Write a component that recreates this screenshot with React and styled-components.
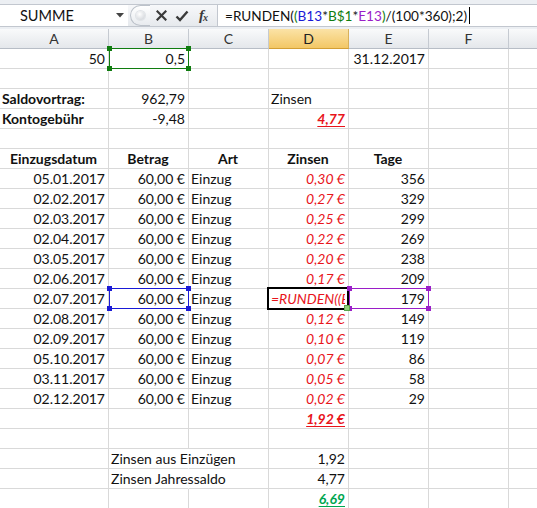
import React from 'react';
import styled, { createGlobalStyle } from 'styled-components';

const Global = createGlobalStyle`
  html, body { margin: 0; padding: 0; background: #fff; }
  body { font-family: Lato, "Liberation Sans", sans-serif; }
`;

const FONT = `Lato, "Liberation Sans", sans-serif`;

const Screen = styled.div`
  width: 537px;
  height: 508px;
  overflow: hidden;
  background: #fff;
  display: flex;
  flex-direction: column;
`;

const FormulaStrip = styled.div`
  height: 29px;
  box-sizing: border-box;
  padding: 4px 0 2px;
  background: #eceff3;
  display: flex;
`;

const FormulaRow = styled.div`
  flex: 1;
  display: flex;
  border-top: 1px solid #c2c7cf;
  border-bottom: 1px solid #c2c7cf;
  background: #fff;
`;

const NameBox = styled.div`
  width: 128px;
  box-sizing: border-box;
  padding: 0 4px 0 20px;
  display: flex;
  align-items: center;
  justify-content: space-between;
  font: 14.5px ${FONT};
  color: #111;
`;

const ButtonArea = styled.div`
  width: 90px;
  box-sizing: border-box;
  display: flex;
  align-items: center;
  background: linear-gradient(#f7f8fa, #e6e9ed);
  border-right: 1px solid #c2c7cf;
`;

const Grip = styled.div`
  width: 20px;
  height: 21px;
  margin-left: 2px;
  box-sizing: border-box;
  border: 1px solid #bcc2ca;
  border-right: none;
  border-radius: 11px 0 0 11px;
  background: linear-gradient(#ffffff, #e8ebef);
  display: flex;
  align-items: center;
  justify-content: center;
`;

const GripDot = styled.div`
  width: 9px;
  height: 9px;
  border-radius: 50%;
  background: radial-gradient(circle at 40% 35%, #ffffff, #c9cdd3);
  box-shadow: 0 0 0 1px #e0e3e7;
`;

const ToolIcon = styled.div`
  width: ${p => p.$w || 20}px;
  display: flex;
  justify-content: center;
  align-items: center;
  color: #3a3a3a;
`;

const FxText = styled.span`
  font: italic bold 15px "Liberation Serif", serif;
  color: #3a3a3a;
  letter-spacing: -1px;
  & sub { font-size: 10px; vertical-align: -1px; }
`;

const FormulaInput = styled.div`
  flex: 1;
  display: flex;
  align-items: center;
  padding-left: 7px;
  font: 13.6px ${FONT};
  color: #111;
  white-space: nowrap;
`;

const Token = styled.span`
  color: ${p => p.$color || '#111'};
`;

const Caret = styled.span`
  display: inline-block;
  width: 1px;
  height: 17px;
  margin-left: 2px;
  background: #000;
`;

const Sheet = styled.div`
  display: grid;
  grid-template-columns: 109px repeat(6, 80px);
  grid-auto-rows: 20px;
`;

const ColHeader = styled.div`
  box-sizing: border-box;
  display: flex;
  align-items: center;
  justify-content: center;
  font: 14px ${FONT};
  color: ${p => (p.$active ? '#222' : '#333')};
  background: ${p =>
    p.$active
      ? 'linear-gradient(#fbe3a6, #f3c766)'
      : 'linear-gradient(#f9fafb, #e4e7eb)'};
  border-right: 1px solid ${p => (p.$active ? '#d8b15a' : '#c5cad1')};
  border-bottom: 1px solid ${p => (p.$active ? '#d39f35' : '#b7bdc6')};
`;

const Cell = styled.div`
  position: relative;
  box-sizing: border-box;
  padding: 0 3px 0 2px;
  display: flex;
  align-items: center;
  justify-content: ${p => (p.$align === 'right' ? 'flex-end' : p.$align === 'center' ? 'center' : 'flex-start')};
  border-right: 1px solid ${p => (p.$open ? 'transparent' : '#d9d9d9')};
  border-bottom: 1px solid #d9d9d9;
  font-family: ${FONT};
  font-size: 14px;
  font-weight: ${p => (p.$bold ? 700 : 400)};
  font-style: ${p => (p.$italic ? 'italic' : 'normal')};
  text-decoration: ${p => (p.$underline ? 'underline' : 'none')};
  text-underline-offset: 2px;
  color: ${p => p.$color || '#111'};
  white-space: nowrap;
`;

const ClipText = styled.span`
  display: block;
  overflow: hidden;
  width: 100%;
`;

const RefBox = styled.div`
  position: absolute;
  top: -1px;
  left: 0;
  right: -1px;
  bottom: -1px;
  border: 1px solid ${p => p.$color};
  pointer-events: none;
  z-index: 2;
`;

const Handle = styled.span`
  position: absolute;
  width: 5px;
  height: 5px;
  background: ${p => p.$color};
  ${p => (p.$top ? 'top: -3px;' : 'bottom: -3px;')}
  ${p => (p.$left ? 'left: -3px;' : 'right: -3px;')}
`;

const ActiveBox = styled.div`
  position: absolute;
  top: -2px;
  left: -2px;
  right: -1px;
  bottom: -2px;
  border: 2px solid #000;
  pointer-events: none;
  z-index: 1;
`;

const FillHandle = styled.span`
  position: absolute;
  right: -2px;
  bottom: -3px;
  width: 4px;
  height: 4px;
  background: #8fd07a;
  border: 1px solid #5aa34a;
  z-index: 3;
`;

const RED = '#e8141b';
const GREEN = '#00a650';
const REF_BLUE = '#1a1ad6';
const REF_GREEN = '#107c10';
const REF_PURPLE = '#9a1ec8';

const COLS = ['A', 'B', 'C', 'D', 'E', 'F', 'G'];

const R = (t, extra = {}) => ({ t, a: 'right', ...extra });
const L = (t, extra = {}) => ({ t, a: 'left', ...extra });
const C = (t, extra = {}) => ({ t, a: 'center', ...extra });

const data = [
  ['05.01.2017', '0,30 €', '356'],
  ['02.02.2017', '0,27 €', '329'],
  ['02.03.2017', '0,25 €', '299'],
  ['02.04.2017', '0,22 €', '269'],
  ['03.05.2017', '0,20 €', '238'],
  ['02.06.2017', '0,17 €', '209'],
  ['02.07.2017', null, '179'],
  ['02.08.2017', '0,12 €', '149'],
  ['02.09.2017', '0,10 €', '119'],
  ['05.10.2017', '0,07 €', '86'],
  ['03.11.2017', '0,05 €', '58'],
  ['02.12.2017', '0,02 €', '29'],
];

const rows = [
  { A: R('50'), B: R('0,5', { ref: REF_GREEN }), E: R('31.12.2017') },
  {},
  { A: L('Saldovortrag:', { bold: true }), B: R('962,79'), D: L('Zinsen') },
  {
    A: L('Kontogebühr', { bold: true }),
    B: R('-9,48'),
    D: R('4,77', { bold: true, italic: true, underline: true, color: RED }),
  },
  {},
  {
    A: C('Einzugsdatum', { bold: true }),
    B: C('Betrag', { bold: true }),
    C: C('Art', { bold: true }),
    D: C('Zinsen', { bold: true }),
    E: C('Tage', { bold: true }),
  },
  ...data.map(([d, z, t]) =>
    z
      ? {
          A: R(d),
          B: R('60,00 €'),
          C: L('Einzug'),
          D: R(z, { italic: true, color: RED }),
          E: R(t),
        }
      : {
          A: R(d),
          B: R('60,00 €', { ref: REF_BLUE }),
          C: L('Einzug'),
          D: L('=RUNDEN((B', {
            italic: true,
            color: RED,
            active: true,
          }),
          E: R(t, { ref: REF_PURPLE }),
        }
  ),
  { D: R('1,92 €', { bold: true, italic: true, underline: true, color: RED }) },
  {},
  { B: L('Zinsen aus Einzügen', { open: true }), D: R('1,92') },
  { B: L('Zinsen Jahressaldo', { open: true }), D: R('4,77') },
  { D: R('6,69', { bold: true, italic: true, underline: true, color: GREEN }) },
];

function Handles({ color }) {
  return (
    <>
      <Handle $color={color} $top $left />
      <Handle $color={color} $top />
      <Handle $color={color} $left />
      <Handle $color={color} />
    </>
  );
}

function SheetCell({ spec }) {
  if (!spec) return <Cell />;
  return (
    <Cell
      $align={spec.a}
      $bold={spec.bold}
      $italic={spec.italic}
      $underline={spec.underline}
      $color={spec.color}
      $open={spec.open}
    >
      {spec.active ? <ClipText>{spec.t}</ClipText> : spec.t}
      {spec.ref && (
        <RefBox $color={spec.ref}>
          <Handles color={spec.ref} />
        </RefBox>
      )}
      {spec.active && (
        <>
          <ActiveBox />
          <FillHandle />
        </>
      )}
    </Cell>
  );
}

function CrossIcon() {
  return (
    <svg width="11" height="11" viewBox="0 0 11 11">
      <path d="M1.5 1.5 L9.5 9.5 M9.5 1.5 L1.5 9.5" stroke="#3a3a3a" strokeWidth="2.2" strokeLinecap="square" />
    </svg>
  );
}

function CheckIcon() {
  return (
    <svg width="14" height="12" viewBox="0 0 14 12">
      <path d="M1.5 6.5 L5 10 L12.5 1.5" stroke="#3a3a3a" strokeWidth="2.4" fill="none" strokeLinejoin="miter" />
    </svg>
  );
}

function DropArrow() {
  return (
    <svg width="8" height="5" viewBox="0 0 8 5">
      <path d="M0 0 H8 L4 4.5 Z" fill="#444" />
    </svg>
  );
}

export default function App() {
  return (
    <Screen>
      <Global />
      <FormulaStrip>
        <FormulaRow>
          <NameBox>
            <span>SUMME</span>
            <DropArrow />
          </NameBox>
          <ButtonArea>
            <Grip>
              <GripDot />
            </Grip>
            <ToolIcon $w={22}>
              <CrossIcon />
            </ToolIcon>
            <ToolIcon $w={20}>
              <CheckIcon />
            </ToolIcon>
            <ToolIcon $w={22}>
              <FxText>
                f<sub>x</sub>
              </FxText>
            </ToolIcon>
          </ButtonArea>
          <FormulaInput>
            <Token>=RUNDEN(</Token>
            <Token $color={REF_GREEN}>(</Token>
            <Token $color={REF_BLUE}>B13</Token>
            <Token>*</Token>
            <Token $color={REF_GREEN}>B$1</Token>
            <Token>*</Token>
            <Token $color={REF_PURPLE}>E13</Token>
            <Token $color={REF_GREEN}>)</Token>
            <Token>/(100*360);2)</Token>
            <Caret />
          </FormulaInput>
        </FormulaRow>
      </FormulaStrip>
      <Sheet>
        {COLS.map(c => (
          <ColHeader key={c} $active={c === 'D'}>
            {c === 'G' ? '' : c}
          </ColHeader>
        ))}
        {rows.map((row, i) =>
          COLS.map(c => <SheetCell key={`${i}-${c}`} spec={row[c]} />)
        )}
      </Sheet>
    </Screen>
  );
}
